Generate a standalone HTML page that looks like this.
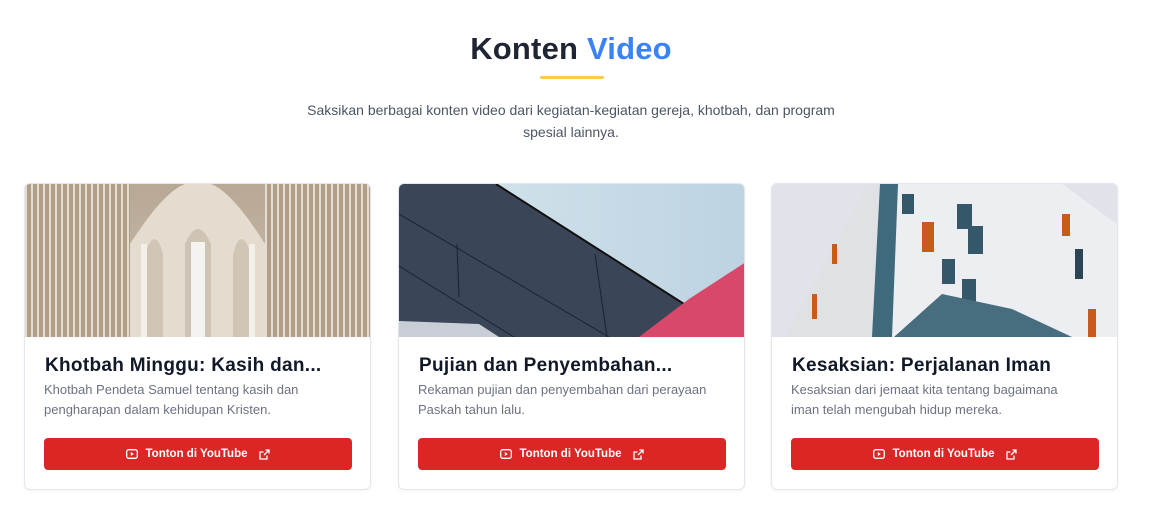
<!DOCTYPE html>
<html><head><meta charset="utf-8"><style>
*{margin:0;padding:0;box-sizing:border-box}
body{width:1169px;height:521px;background:#fff;font-family:"Liberation Sans",sans-serif;position:relative;overflow:hidden}
h2{position:absolute;top:31px;left:0;width:1142px;text-align:center;font-size:31px;font-weight:700;color:#1f2533;letter-spacing:0.2px}
h2 span{color:#3b82f6}
.bar{position:absolute;left:540px;top:76px;width:64px;height:3px;background:#f5cd4b;border-radius:2px}
.sub{position:absolute;top:99px;left:291px;width:560px;text-align:center;font-size:14px;line-height:22px;color:#4b5563}
.card{position:absolute;top:183px;width:347px;height:307px;border:1px solid #e3e6ec;border-radius:6px;overflow:hidden;background:#fff;box-shadow:0 1px 3px rgba(0,0,0,.05)}
.img{height:153px;width:100%;position:relative;overflow:hidden}
.t{position:absolute;left:20px;top:171px;font-size:19px;letter-spacing:0.3px;font-weight:700;color:#111827;white-space:nowrap}
.d{position:absolute;left:19px;top:196px;width:302px;font-size:13px;line-height:20px;color:#6b7280}
.btn{position:absolute;left:19px;top:254px;width:308px;height:32px;background:#dc2626;border-radius:4px;color:#fff;font-size:11.5px;font-weight:700;display:flex;align-items:center;justify-content:center;gap:8px}
</style></head><body>
<h2>Konten <span>Video</span></h2>
<div class="bar"></div>
<div class="sub">Saksikan berbagai konten video dari kegiatan-kegiatan gereja, khotbah, dan program spesial lainnya.</div>

<div class="card" style="left:24px">
<div class="img">
<svg width="347" height="153" viewBox="0 0 347 153">
<defs><linearGradient id="g1" x1="0" x2="0" y1="0" y2="1"><stop offset="0" stop-color="#b8a896"/><stop offset="1" stop-color="#cbbfae"/></linearGradient>
<pattern id="st" width="6" height="153" patternUnits="userSpaceOnUse"><rect width="6" height="153" fill="#b09e89"/><rect x="0" width="2" height="153" fill="#e6ddd1"/></pattern></defs>
<rect width="347" height="153" fill="url(#g1)"/>
<rect x="0" width="105" height="153" fill="url(#st)"/>
<rect x="240" width="107" height="153" fill="url(#st)"/>
<path d="M105 153 V60 Q150 -10 173 0 Q196 -10 240 60 V153Z" fill="#e4dccf"/>
<path d="M120 153 V70 Q130 40 138 70 V153Z" fill="#d1c6b6"/>
<path d="M160 153 V60 Q173 30 186 60 V153Z" fill="#cfc4b3"/>
<path d="M208 153 V70 Q216 40 226 70 V153Z" fill="#d1c6b6"/>
<rect x="166" y="58" width="14" height="95" fill="#f5f3ef"/>
<rect x="116" y="60" width="6" height="93" fill="#f3f0ea"/>
<rect x="224" y="60" width="6" height="93" fill="#f3f0ea"/>
</svg></div>
<div class="t">Khotbah Minggu: Kasih dan...</div>
<div class="d">Khotbah Pendeta Samuel tentang kasih dan pengharapan dalam kehidupan Kristen.</div>
<div class="btn"><svg width="12" height="10" viewBox="0 0 12 10"><rect x="0.7" y="0.7" width="10.6" height="8.6" rx="2" fill="none" stroke="#fff" stroke-width="1.3"/><path d="M4.8 3 L7.8 5 L4.8 7Z" fill="#fff"/></svg><span>Tonton di YouTube</span><svg width="11" height="11" viewBox="0 0 11 11" style="margin-left:4px"><path d="M8 6.5V10H1V3h3.5M6.5 1H10V4.5M10 1L5 6" fill="none" stroke="#fff" stroke-width="1.3"/></svg></div>
</div>

<div class="card" style="left:398px">
<div class="img">
<svg width="347" height="153" viewBox="0 0 347 153">
<defs><linearGradient id="sk" x1="0" x2="1"><stop offset="0" stop-color="#d6e6ec"/><stop offset="1" stop-color="#bdd3e2"/></linearGradient></defs>
<rect width="347" height="153" fill="url(#sk)"/>
<path d="M0 0 H97 L285 120 L260 153 H0Z" fill="#3b4558"/>
<path d="M97 0 L285 120" stroke="#111" stroke-width="2"/>
<path d="M0 30 L210 153 M0 82 L115 153 M58 60 L60 113 M196 70 L208 153" stroke="#1c2230" stroke-width="1"/>
<path d="M0 137 L80 140 L100 153 H0Z" fill="#c9ced6"/>
<path d="M240 153 L290 115 L347 78 V153Z" fill="#d8486a"/>
</svg></div>
<div class="t">Pujian dan Penyembahan...</div>
<div class="d">Rekaman pujian dan penyembahan dari perayaan Paskah tahun lalu.</div>
<div class="btn"><svg width="12" height="10" viewBox="0 0 12 10"><rect x="0.7" y="0.7" width="10.6" height="8.6" rx="2" fill="none" stroke="#fff" stroke-width="1.3"/><path d="M4.8 3 L7.8 5 L4.8 7Z" fill="#fff"/></svg><span>Tonton di YouTube</span><svg width="11" height="11" viewBox="0 0 11 11" style="margin-left:4px"><path d="M8 6.5V10H1V3h3.5M6.5 1H10V4.5M10 1L5 6" fill="none" stroke="#fff" stroke-width="1.3"/></svg></div>
</div>

<div class="card" style="left:771px">
<div class="img">
<svg width="347" height="153" viewBox="0 0 347 153">
<rect width="347" height="153" fill="#e2e3ea"/>
<path d="M12 153 L95 0 H290 L345 40 V153Z" fill="#eceef1"/>
<path d="M12 153 L95 0 H120 V153Z" fill="#dfe1e5"/>
<path d="M100 153 L108 0 H126 L120 153Z" fill="#3e6a7c"/>
<rect x="185" y="20" width="15" height="25" fill="#34586a"/>
<rect x="196" y="42" width="15" height="28" fill="#34586a"/>
<rect x="150" y="38" width="12" height="30" fill="#c85a1e"/>
<rect x="170" y="75" width="13" height="25" fill="#34586a"/>
<rect x="190" y="95" width="14" height="30" fill="#34586a"/>
<rect x="130" y="10" width="12" height="20" fill="#34586a"/>
<rect x="290" y="30" width="8" height="22" fill="#c85a1e"/>
<rect x="303" y="65" width="8" height="30" fill="#2d4452"/>
<rect x="316" y="125" width="8" height="28" fill="#c85a1e"/>
<rect x="60" y="60" width="5" height="20" fill="#c85a1e"/>
<rect x="40" y="110" width="5" height="25" fill="#c85a1e"/>
<path d="M122 153 L170 110 L240 125 L300 153Z" fill="#476d7f"/>
</svg></div>
<div class="t">Kesaksian: Perjalanan Iman</div>
<div class="d" style="width:285px">Kesaksian dari jemaat kita tentang bagaimana iman telah mengubah hidup mereka.</div>
<div class="btn"><svg width="12" height="10" viewBox="0 0 12 10"><rect x="0.7" y="0.7" width="10.6" height="8.6" rx="2" fill="none" stroke="#fff" stroke-width="1.3"/><path d="M4.8 3 L7.8 5 L4.8 7Z" fill="#fff"/></svg><span>Tonton di YouTube</span><svg width="11" height="11" viewBox="0 0 11 11" style="margin-left:4px"><path d="M8 6.5V10H1V3h3.5M6.5 1H10V4.5M10 1L5 6" fill="none" stroke="#fff" stroke-width="1.3"/></svg></div>
</div>
</body></html>
